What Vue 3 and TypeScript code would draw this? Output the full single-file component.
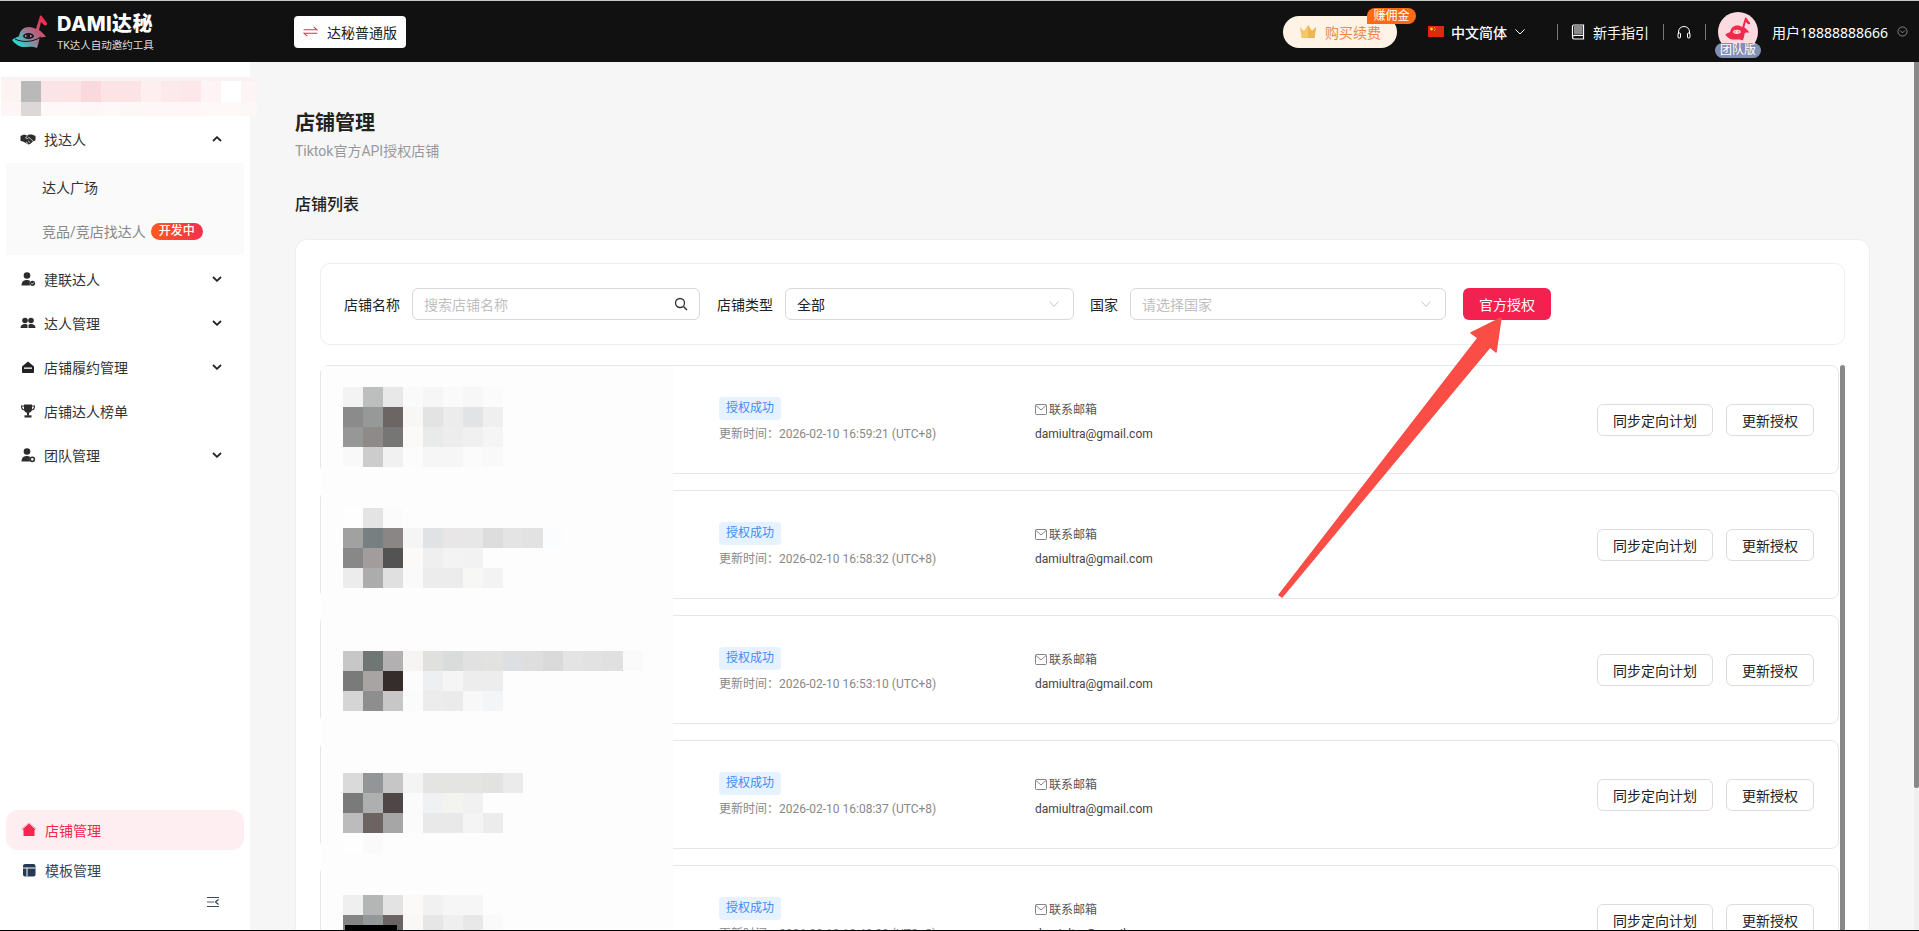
<script setup lang="ts">
interface MenuItem {
  label: string
  icon: string
  arrow?: boolean
}

interface ShopRow {
  time: string
  offset: number
  cells: string[][]
}

const menuAfter: MenuItem[] = [
  { label: '建联达人', icon: 'link', arrow: true },
  { label: '达人管理', icon: 'users', arrow: true },
  { label: '店铺履约管理', icon: 'store', arrow: true },
  { label: '店铺达人榜单', icon: 'trophy' },
  { label: '团队管理', icon: 'team', arrow: true },
]

const profileCells: string[][] = [
  ['#fdf3f3', '#b9b9b9', '#fbe4e7', '#fbe3e6', '#f9d9dd', '#fbe3e6', '#fbe3e6', '#fdeef0', '#fce9eb', '#fce7ea', '#fef4f5', '#ffffff', '#fdf5f5'],
  ['#fef6f6', '#dcd8d8', '#fef8f8', '#fef8f8', '#fef7f8', '#fef8f8', '#fef7f8', '#fef6f7', '#fef6f7', '#fef6f7', '#fef8f8', '#fef8f8', '#fdf8f8'],
]

const shops: ShopRow[] = [
  {
    time: '2026-02-10 16:59:21 (UTC+8)',
    offset: 21,
    cells: [
      ['#f3f3f3', '#bdbfbe', '#e8e8e8', '#fafafa', '#f6f6f6', '#fafafa', '#f7f7f7', '#fbfbfb'],
      ['#8b8b8b', '#959a99', '#6b6664', '#f8f7f5', '#e3e3e3', '#ececec', '#e2e3e5', '#efefef'],
      ['#979797', '#8f8a8a', '#767675', '#fbfaf8', '#e9eaea', '#ededed', '#f0f0f0', '#f5f5f5'],
      ['#f9f9f9', '#cccccc', '#f1f1f1', '#fcfcfc', '#f6f6f6', '#f6f6f6', '#fbfbfb', '#f9f9f9'],
    ],
  },
  {
    time: '2026-02-10 16:58:32 (UTC+8)',
    offset: 17,
    cells: [
      ['#fefefe', '#e4e4e4', '#fbfbfb'],
      ['#a1a1a1', '#778080', '#8a8686', '#f5f5f5', '#e0e2e4', '#e8e6e6', '#e7e7e7', '#dddddd', '#e4e4e4', '#e2e2e2', '#fbfcfd'],
      ['#888888', '#a39c9c', '#535353', '#fbfaf8', '#efefef', '#f3f3f3', '#f2f2f2'],
      ['#ececec', '#acacac', '#e0e0e0', '#fafafa', '#ececec', '#ececec', '#f7f7f5', '#f3f3f3'],
    ],
  },
  {
    time: '2026-02-10 16:53:10 (UTC+8)',
    offset: 35,
    cells: [
      ['#c7c7c7', '#6f7673', '#b2b0b0', '#f6f5f3', '#e0e0de', '#d9dcdb', '#e1e1e1', '#e2e2e0', '#dddfe2', '#dedede', '#dadada', '#e4e4e4', '#e2e2e2', '#e0e0e0', '#fafafa'],
      ['#7a7a7a', '#a8a4a4', '#352c2c', '#fcfcfc', '#eeeff1', '#f5f5f5', '#ededed', '#ededed'],
      ['#d5d5d5', '#8e8e8e', '#c7c7c7', '#fbfbfb', '#ececec', '#ebebeb', '#f8f8f8', '#f4f5f7'],
    ],
  },
  {
    time: '2026-02-10 16:08:37 (UTC+8)',
    offset: 32,
    cells: [
      ['#dadada', '#939696', '#c6c6c6', '#f4f4f4', '#e4e4e2', '#e4e4e2', '#e4e4e2', '#e2e3e1', '#ebebeb'],
      ['#7a7a7a', '#aeb0b0', '#4f4747', '#fbfbfb', '#f0f1f3', '#f3f3f0', '#f1f1f1'],
      ['#bcbcbc', '#6c6363', '#a6a6a6', '#fbfbfb', '#e9e9e9', '#e9e9e9', '#f4f4f4', '#ececec'],
      ['#fefefe', '#fafafa'],
    ],
  },
  {
    time: '2026-02-10 10:40:20 (UTC+8)',
    offset: 29,
    cells: [
      ['#efefef', '#b4b6b5', '#e3e3e3', '#fbfaf8', '#f1f1f1', '#f6f6f6', '#f6f6f6'],
      ['#858585', '#939898', '#6a6464', '#f9f8f6', '#e6e6e6', '#efefef', '#e8e8e8', '#fafafa'],
    ],
  },
]

const ghostPath = 'M0 25 C4 22 6 22 7 21 C8 15 12 12 17 12 C20 12 22 13 24 14 L28 1 C29 0 30 1 30.500 2 L35 8 C35.500 10 34 11 32 10 L29 7 L27 15 C30 17 32 19 34 22 C31 22 29 22 27.500 23 C27 27 26 30 25 33 C21 31 16 32 10 32 C6 31 2 28 0 25 Z'
</script>

<template>
  <div class="page">
    <!-- 顶部栏 -->
    <header class="topbar">
      <div class="brand">
        <svg class="brand_logo" viewBox="0 0 36 34">
          <defs>
            <linearGradient id="ghost" x1="0.9" y1="0.1" x2="0.05" y2="0.8">
              <stop offset="0" stop-color="#f5264f" />
              <stop offset="0.5" stop-color="#a8708a" />
              <stop offset="1" stop-color="#22dcd6" />
            </linearGradient>
          </defs>
          <path :d="ghostPath" fill="url(#ghost)" />
          <path d="M3 24 C10 27.500 20 27.500 29 22" fill="none" stroke="#141414" stroke-width="1" />
          <ellipse cx="16.500" cy="21" rx="5.500" ry="3" fill="#1a1a22" />
          <circle cx="13.800" cy="21" r="0.900" fill="#f5769a" />
          <circle cx="18.800" cy="21" r="0.900" fill="#f5769a" />
        </svg>
        <div class="brand_text">
          <div class="brand_name">DAMI达秘</div>
          <div class="brand_sub">TK达人自动邀约工具</div>
        </div>
      </div>
      <button class="version_btn">
        <svg class="version_icon" viewBox="0 0 16 12">
          <path d="M0.500 4 H15 L11.500 1 M15.500 8 H1 L4.500 11" fill="none" stroke="#f5264f" stroke-width="1.100" />
        </svg>
        达秘普通版
      </button>

      <div class="top_right">
        <div class="buy_pill">
          <svg class="crown" viewBox="0 0 18 15">
            <path d="M1 3 L5 7 L9 1 L13 7 L17 3 L15.500 14 H2.500 Z" fill="#f3c66d" />
            <path d="M9 1 L13 7 L17 3 L15.500 14 H9 Z" fill="#eeb554" />
          </svg>
          购买续费
          <span class="buy_badge">赚佣金</span>
        </div>
        <svg class="flag" viewBox="0 0 16 11">
          <rect width="16" height="11" fill="#de2910" />
          <circle cx="3.500" cy="3" r="1.400" fill="#ffde00" />
          <circle cx="6.500" cy="1.500" r="0.500" fill="#ffde00" />
          <circle cx="7.200" cy="3" r="0.500" fill="#ffde00" />
          <circle cx="6.500" cy="4.500" r="0.500" fill="#ffde00" />
        </svg>
        <span class="lang">中文简体</span>
        <svg class="lang_arrow" viewBox="0 0 10 6">
          <path d="M0.500 0.500 L5 5 L9.500 0.500" fill="none" stroke="#fff" stroke-width="1" />
        </svg>
        <i class="top_line first"></i>
        <svg class="book" viewBox="0 0 14 16">
          <path d="M1.500 13 V2.500 C1.500 1.500 2 1 3 1 H12.500 V15 H3 C2 15 1.500 14 1.500 13 C1.500 12 2 11.500 3 11.500 H12.500" fill="none" stroke="#fff" stroke-width="1.200" />
          <rect x="3" y="2" width="8.500" height="8.500" fill="#8a8a8a" />
        </svg>
        <span class="guide">新手指引</span>
        <i class="top_line"></i>
        <svg class="headset" viewBox="0 0 14 14">
          <path d="M1.500 9 V7 C1.500 3.500 4 1.500 7 1.500 C10 1.500 12.500 3.500 12.500 7 V9" fill="none" stroke="#fff" stroke-width="1" />
          <rect x="1" y="8" width="2.500" height="5" rx="1" fill="none" stroke="#fff" stroke-width="1" />
          <rect x="10.500" y="8" width="2.500" height="5" rx="1" fill="none" stroke="#fff" stroke-width="1" />
        </svg>
        <i class="top_line"></i>
        <div class="avatar">
          <svg class="avatar_logo" viewBox="0 0 36 34">
            <path :d="ghostPath" fill="#f02a4d" />
            <ellipse cx="16.500" cy="21" rx="5.500" ry="3" fill="#fdd9e0" />
            <circle cx="13.800" cy="21" r="0.900" fill="#f02a4d" />
            <circle cx="18.800" cy="21" r="0.900" fill="#f02a4d" />
          </svg>
          <span class="avatar_badge">团队版</span>
        </div>
        <span class="user_name">用户18888888666</span>
        <svg class="user_arrow" viewBox="0 0 12 12">
          <circle cx="6" cy="6" r="5" fill="none" stroke="#aaa" stroke-width="0.800" />
          <path d="M3.500 5 L6 7.500 L8.500 5" fill="none" stroke="#aaa" stroke-width="0.800" />
        </svg>
      </div>
    </header>

    <div class="body_wrap">
      <!-- 左侧导航 -->
      <aside class="sidebar">
        <div class="profile">
          <div v-for="(line, i) in profileCells" :key="i" class="profile_line">
            <span v-for="(c, j) in line" :key="j" class="profile_cell" :style="{ background: c }"></span>
          </div>
        </div>

        <nav class="menu">
          <div class="menu_item">
            <svg class="menu_icon" viewBox="0 0 16 16">
              <path d="M0.500 5 L4 3.500 L7 4.500 L9 3.500 L12 3.500 L15.500 5 V9.500 L13.500 10 L10 13 C9 13.500 8 13.500 7.500 13 L3 10.500 L0.500 10 Z" fill="#2c2c2c" />
              <path d="M7.500 4.500 L5.500 7 C6.500 8 7.500 7.800 9 6.500 L13 10 M6 11 L8 12.500 M8 9.800 L10 11.500" fill="none" stroke="#fff" stroke-width="0.700" />
            </svg>
            <span>找达人</span>
            <svg class="menu_arrow" viewBox="0 0 10 6">
              <path d="M1 5 L5 1.200 L9 5" fill="none" stroke="#222" stroke-width="1.800" />
            </svg>
          </div>
          <div class="submenu">
            <div class="sub_item">达人广场</div>
            <div class="sub_item muted">
              竞品/竞店找达人
              <span class="dev_tag">开发中</span>
            </div>
          </div>
          <div v-for="item in menuAfter" :key="item.label" class="menu_item">
            <svg class="menu_icon" viewBox="0 0 16 16">
              <template v-if="item.icon === 'link'">
                <circle cx="7" cy="4.500" r="3.300" fill="#2c2c2c" />
                <path d="M1.500 14.500 C1.500 10 4.500 9 7 9 C8 9 9 9.200 9.800 9.600 V14.500 Z" fill="#2c2c2c" />
                <circle cx="12.500" cy="12.300" r="2.600" fill="#2c2c2c" />
                <path d="M11.200 12.300 L12.200 13.300 L13.800 11.500" fill="none" stroke="#fff" stroke-width="0.800" />
              </template>
              <template v-else-if="item.icon === 'users'">
                <circle cx="5" cy="5.500" r="2.800" fill="#2c2c2c" />
                <circle cx="11" cy="5.500" r="2.800" fill="#2c2c2c" />
                <path d="M0.500 13 C0.500 10 2.500 9 5 9 C6 9 7 9.300 7.500 9.800 V13 Z" fill="#2c2c2c" />
                <path d="M8.500 13 V9.800 C9 9.300 10 9 11 9 C13.500 9 15.500 10 15.500 13 Z" fill="#2c2c2c" />
              </template>
              <template v-else-if="item.icon === 'store'">
                <path d="M2 7.500 L8 2.500 L14 7.500 V13 C14 13.500 13.500 14 13 14 H3 C2.500 14 2 13.500 2 13 Z" fill="#222" />
                <rect x="4" y="8.500" width="8" height="1.300" fill="#fff" />
              </template>
              <template v-else-if="item.icon === 'trophy'">
                <path d="M4 1.500 H12 V6 C12 8.500 10 10 8 10 C6 10 4 8.500 4 6 Z" fill="#2c2c2c" />
                <path d="M4 3 H1.500 C1.500 5.500 2.500 7 5 7 M12 3 H14.500 C14.500 5.500 13.500 7 11 7" fill="none" stroke="#2c2c2c" stroke-width="1.100" />
                <rect x="7" y="9.500" width="2" height="3" fill="#2c2c2c" />
                <rect x="4.500" y="12.300" width="7" height="2.200" fill="#2c2c2c" />
              </template>
              <template v-else>
                <circle cx="7" cy="4.500" r="3.300" fill="#2c2c2c" />
                <path d="M1.500 14.500 C1.500 10 4.500 9 7 9 C8 9 9 9.200 9.800 9.600 V14.500 Z" fill="#2c2c2c" />
                <circle cx="12.300" cy="12.300" r="2.100" fill="#fff" stroke="#2c2c2c" stroke-width="1.500" />
              </template>
            </svg>
            <span>{{ item.label }}</span>
            <svg v-if="item.arrow" class="menu_arrow" viewBox="0 0 10 6">
              <path d="M1 1 L5 4.800 L9 1" fill="none" stroke="#222" stroke-width="1.800" />
            </svg>
          </div>
        </nav>

        <div class="menu_bottom">
          <div class="bottom_item active">
            <svg class="menu_icon" viewBox="0 0 16 16">
              <path d="M1.500 7.500 L8 1.500 L14.500 7.500 L13.500 8 V14 H2.500 V8 Z" fill="#f5264f" />
              <path d="M0.500 7 L8 1 L15.500 7" fill="none" stroke="#f98aa2" stroke-width="0.800" />
            </svg>
            <span>店铺管理</span>
          </div>
          <div class="bottom_item">
            <svg class="menu_icon" viewBox="0 0 16 16">
              <rect x="2" y="2" width="12.500" height="12.500" rx="2" fill="#253a52" />
              <path d="M2 6 H14.500 M6 6 V14.500" stroke="#fff" stroke-width="1" />
            </svg>
            <span>模板管理</span>
          </div>
          <div class="collapse_row">
            <svg class="collapse_icon" viewBox="0 0 12 10">
              <path d="M0 0.500 H12 M0 9.500 H12" stroke="#3b4a5c" stroke-width="1" />
              <path d="M0 5 H7" stroke="#8b95a1" stroke-width="1.500" />
              <path d="M11.500 2.500 L8.500 5 L11.500 7.500" fill="none" stroke="#3b4a5c" stroke-width="1.300" />
            </svg>
          </div>
        </div>
      </aside>

      <!-- 内容区 -->
      <main class="content">
        <h1 class="page_title">店铺管理</h1>
        <div class="page_sub">Tiktok官方API授权店铺</div>
        <h2 class="list_title">店铺列表</h2>

        <section class="card">
          <div class="filter_box">
            <label class="filter_label">店铺名称</label>
            <div class="field name_field">
              <span class="placeholder">搜索店铺名称</span>
              <svg class="search_icon" viewBox="0 0 14 14">
                <circle cx="6" cy="6" r="4.500" fill="none" stroke="#333" stroke-width="1.300" />
                <path d="M9.500 9.500 L13 13" stroke="#333" stroke-width="1.500" />
              </svg>
            </div>
            <label class="filter_label">店铺类型</label>
            <div class="field type_field">
              <span>全部</span>
              <svg class="select_arrow" viewBox="0 0 10 6">
                <path d="M0.500 0.500 L5 5.500 L9.500 0.500" fill="none" stroke="#bbb" stroke-width="0.900" />
              </svg>
            </div>
            <label class="filter_label">国家</label>
            <div class="field country_field">
              <span class="placeholder">请选择国家</span>
              <svg class="select_arrow" viewBox="0 0 10 6">
                <path d="M0.500 0.500 L5 5.500 L9.500 0.500" fill="none" stroke="#bbb" stroke-width="0.900" />
              </svg>
            </div>
            <button class="auth_btn">官方授权</button>
          </div>

          <div class="list_wrap">
            <div class="shop_list">
              <div v-for="shop in shops" :key="shop.time" class="shop_row">
                <div class="status_col">
                  <span class="status_tag">授权成功</span>
                  <div class="update_time">更新时间：{{ shop.time }}</div>
                </div>
                <div class="mail_col">
                  <div class="mail_label">
                    <svg class="mail_icon" viewBox="0 0 12 11">
                      <rect x="0.500" y="0.500" width="11" height="10" rx="1" fill="none" stroke="#666" stroke-width="0.800" />
                      <path d="M1 1.500 L6 6 L11 1.500" fill="none" stroke="#666" stroke-width="0.800" />
                    </svg>
                    联系邮箱
                  </div>
                  <div class="mail_value">damiultra@gmail.com</div>
                </div>
                <div class="row_actions">
                  <button class="plain_btn wide">同步定向计划</button>
                  <button class="plain_btn">更新授权</button>
                </div>
              </div>
            </div>

            <!-- 打码遮挡 -->
            <div class="mask_col">
              <div v-for="shop in shops" :key="shop.time" class="mask_block" :style="{ paddingTop: shop.offset + 'px' }">
                <div v-for="(line, i) in shop.cells" :key="i" class="mask_line">
                  <span v-for="(c, j) in line" :key="j" class="mask_cell" :style="{ background: c }"></span>
                </div>
              </div>
              <div class="mask_blob"></div>
            </div>
            <div class="list_thumb"></div>
          </div>
        </section>
      </main>
      <div class="page_track"><div class="page_thumb"></div></div>
    </div>
    <div class="bottom_line"></div>

    <!-- 标注箭头 -->
    <svg class="annot_arrow" viewBox="0 0 1919 931">
      <path d="M1279 595 L1478 338 L1471 333 L1501 318 L1496 352 L1490 347 L1282 597 Z" fill="#f94d46" stroke="#f94d46" stroke-width="1.500" stroke-linejoin="round" />
    </svg>
  </div>
</template>

<style scoped>
.page {
  position: relative;
  width: 1919px;
  height: 931px;
  overflow: hidden;
  display: flex;
  flex-direction: column;
  background: #f6f6f6;
  font-family: Roboto, "Noto Sans CJK SC", sans-serif;
  font-size: 14px;
  color: #222;
}

/* 顶部栏 */
.topbar {
  flex: none;
  height: 61px;
  box-sizing: content-box;
  border-top: 1px solid #c8c8c8;
  background: #111;
  display: flex;
  align-items: center;
  color: #fff;
}

.brand {
  display: flex;
  align-items: center;
  margin-left: 12px;
  width: 282px;
}

.brand_logo {
  width: 36px;
  height: 34px;
  margin-right: 9px;
}

.brand_name {
  font-family: Inter, "Noto Sans CJK SC", sans-serif;
  font-size: 20px;
  font-weight: 800;
  line-height: 26px;
  letter-spacing: 0.4px;
  white-space: nowrap;
}

.brand_sub {
  font-size: 10.500px;
  line-height: 14px;
  margin-top: 2px;
  color: #ddd;
  white-space: nowrap;
}

.version_btn {
  width: 112px;
  height: 32px;
  padding: 0;
  border: none;
  border-radius: 4px;
  background: #fff;
  color: #222;
  font: inherit;
  display: flex;
  align-items: center;
  justify-content: center;
  gap: 9px;
}

.version_icon {
  width: 15px;
  height: 11px;
}

.top_right {
  margin-left: auto;
  display: flex;
  align-items: center;
  height: 100%;
}

.buy_pill {
  position: relative;
  width: 114px;
  height: 32px;
  box-sizing: border-box;
  border-radius: 16px;
  background: #fef3e4;
  color: #f0874a;
  display: flex;
  align-items: center;
  padding-left: 16px;
  gap: 8px;
}

.crown {
  width: 18px;
  height: 15px;
}

.buy_badge {
  position: absolute;
  left: 84px;
  top: -8px;
  width: 49px;
  height: 16px;
  border-radius: 8px 8px 8px 0;
  background: #ff6a13;
  color: #fff;
  font-size: 12px;
  line-height: 16px;
  text-align: center;
}

.flag {
  width: 16px;
  height: 11px;
  margin-left: 31px;
}

.lang {
  margin-left: 7px;
  font-weight: 500;
}

.lang_arrow {
  width: 10px;
  height: 6px;
  margin-left: 8px;
}

.top_line {
  width: 1px;
  height: 16px;
  background: #777;
  margin: 0 13px 0 14px;
}

.top_line.first {
  margin-left: 32px;
}

.book {
  width: 14px;
  height: 16px;
  margin-right: 8px;
}

.headset {
  width: 14px;
  height: 14px;
}

.avatar {
  position: relative;
  width: 40px;
  height: 40px;
  border-radius: 50%;
  background: #fdd9e0;
  margin-left: -1px;
  margin-right: 14px;
  display: flex;
  align-items: center;
  justify-content: center;
}

.avatar_logo {
  width: 26px;
  height: 24px;
  margin-top: -6px;
}

.avatar_badge {
  position: absolute;
  left: -3px;
  top: 31px;
  width: 46px;
  height: 15px;
  border-radius: 8px;
  background: #8190b2;
  color: #fff;
  font-size: 12px;
  line-height: 15px;
  text-align: center;
}

.user_name {
  font-family: "Noto Sans", "Noto Sans CJK SC", sans-serif;
  white-space: nowrap;
  width: 125px;
}

.user_arrow {
  width: 11px;
  height: 11px;
  margin-right: 11px;
}

/* 主体 */
.body_wrap {
  position: relative;
  flex: 1;
  min-height: 0;
  display: flex;
}

.bottom_line {
  flex: none;
  height: 1px;
  background: #000;
}

/* 左侧导航 */
.sidebar {
  flex: none;
  width: 250px;
  background: #fff;
  display: flex;
  flex-direction: column;
  position: relative;
}

.profile {
  position: absolute;
  left: 1px;
  top: 15px;
  width: 256px;
  height: 39px;
  padding-top: 4px;
  box-sizing: border-box;
  background: #f8f3f3;
  overflow: hidden;
}

.profile_line {
  display: flex;
}

.profile_line + .profile_line .profile_cell {
  height: 14px;
}

.profile_cell {
  flex: none;
  width: 20px;
  height: 21px;
}

.menu {
  padding-top: 55px;
}

.menu_item {
  height: 44px;
  display: flex;
  align-items: center;
  padding: 0 28px 0 20px;
  color: #333;
}

.menu_icon {
  flex: none;
  width: 16px;
  height: 16px;
  margin-right: 8px;
}

.menu_arrow {
  width: 10px;
  height: 6px;
  margin-left: auto;
}

.submenu {
  margin: 2px 6px;
  padding-top: 2px;
  background: #fafafa;
  height: 92px;
  box-sizing: border-box;
}

.sub_item {
  height: 44px;
  padding-left: 36px;
  display: flex;
  align-items: center;
  color: #333;
}

.sub_item.muted {
  color: #888;
}

.dev_tag {
  margin-left: 5px;
  width: 52px;
  height: 17px;
  border-radius: 9px;
  background: linear-gradient(90deg, #ff5a1f, #f5304f);
  color: #fff;
  font-size: 12px;
  font-weight: 500;
  line-height: 17px;
  text-align: center;
}

.menu_bottom {
  margin-top: auto;
  padding: 0 6px 0;
}

.bottom_item {
  height: 40px;
  box-sizing: border-box;
  border-radius: 12px;
  display: flex;
  align-items: center;
  padding-left: 15px;
  color: #34465a;
}

.bottom_item.active {
  background: #ffeef1;
  color: #f5264f;
}

.collapse_row {
  height: 40px;
  display: flex;
  justify-content: flex-end;
  padding: 7px 25px 0 0;
  box-sizing: border-box;
}

.collapse_icon {
  width: 12px;
  height: 10px;
}

/* 内容区 */
.content {
  flex: 1;
  min-width: 0;
  display: flex;
  flex-direction: column;
  padding: 47px 44px 0 45px;
}

.page_title {
  margin: 0;
  font-size: 20px;
  font-weight: 700;
  line-height: 28px;
  color: #222;
}

.page_sub {
  margin-top: 4px;
  line-height: 20px;
  color: #999;
}

.list_title {
  margin: 32px 0 0;
  font-size: 16px;
  font-weight: 500;
  line-height: 24px;
  color: #222;
}

.card {
  flex: 1;
  min-height: 0;
  margin-top: 22px;
  box-sizing: border-box;
  background: #fff;
  border: 1px solid #eee;
  border-bottom: none;
  border-radius: 12px 12px 0 0;
  padding: 23px 24px 0;
  display: flex;
  flex-direction: column;
}

.filter_box {
  flex: none;
  height: 82px;
  box-sizing: border-box;
  border: 1px solid #eee;
  border-radius: 10px;
  padding-left: 23px;
  display: flex;
  align-items: center;
}

.filter_label {
  flex: none;
  color: #222;
  margin-right: 12px;
}

.field {
  flex: none;
  height: 32px;
  box-sizing: border-box;
  border: 1px solid #d9d9d9;
  border-radius: 6px;
  padding: 0 11px;
  display: flex;
  align-items: center;
  justify-content: space-between;
  margin-right: 17px;
}

.name_field {
  width: 288px;
}

.type_field {
  width: 289px;
  margin-right: 16px;
}

.country_field {
  width: 316px;
}

.placeholder {
  color: #bfbfbf;
}

.search_icon {
  width: 14px;
  height: 14px;
}

.select_arrow {
  width: 10px;
  height: 6px;
  margin-right: 3px;
}

.auth_btn {
  width: 88px;
  height: 32px;
  padding: 0;
  border: none;
  border-radius: 6px;
  background: #f2214f;
  color: #fff;
  font: inherit;
}

.list_wrap {
  position: relative;
  flex: 1;
  min-height: 0;
  margin-top: 20px;
  overflow: hidden;
}

.shop_list {
  width: 1519px;
  display: flex;
  flex-direction: column;
  gap: 16px;
}

.shop_row {
  flex: none;
  height: 109px;
  box-sizing: border-box;
  border: 1px solid #e6e6e6;
  border-radius: 8px;
  padding: 0 24px 0 398px;
  display: flex;
  align-items: center;
}

.status_col {
  width: 316px;
}

.status_tag {
  display: inline-block;
  width: 62px;
  height: 23px;
  border-radius: 4px;
  background: #e6f2ff;
  color: #3d8ef5;
  font-size: 12px;
  line-height: 23px;
  text-align: center;
}

.update_time {
  margin-top: 5px;
  font-size: 12px;
  line-height: 18px;
  color: #888;
}

.mail_col {
  padding-top: 4px;
  font-size: 12px;
  line-height: 18px;
}

.mail_label {
  display: flex;
  align-items: center;
  gap: 2px;
  color: #555;
}

.mail_icon {
  width: 12px;
  height: 11px;
}

.mail_value {
  margin-top: 6px;
  color: #444;
}

.row_actions {
  margin-left: auto;
  display: flex;
  gap: 13px;
}

.plain_btn {
  width: 88px;
  height: 32px;
  padding: 0;
  background: #fff;
  border: 1px solid #dcdcdc;
  border-radius: 6px;
  color: #222;
  font: inherit;
}

.plain_btn.wide {
  width: 116px;
}

.mask_col {
  position: absolute;
  left: 1px;
  top: 1px;
  bottom: 0;
  width: 352px;
  background: #fdfdfd;
  overflow: hidden;
}

.mask_block {
  height: 125px;
  box-sizing: border-box;
  padding-left: 22px;
}

.mask_line {
  display: flex;
}

.mask_cell {
  flex: none;
  width: 20px;
  height: 20px;
}

.mask_blob {
  position: absolute;
  left: 24px;
  bottom: 0;
  width: 52px;
  height: 5px;
  background: #000;
}

.list_thumb {
  position: absolute;
  right: 0;
  top: 0;
  bottom: 0;
  width: 5px;
  border-radius: 3px 3px 0 0;
  background: #888;
}

.page_track {
  flex: none;
  width: 5px;
  background: #efefef;
}

.page_thumb {
  height: 726px;
  border-radius: 0 0 2px 2px;
  background: #888;
}

.annot_arrow {
  position: absolute;
  left: 0;
  top: 0;
  width: 1919px;
  height: 931px;
  pointer-events: none;
}
</style>

<style>
html,
body {
  margin: 0;
  overflow: hidden;
}
</style>
